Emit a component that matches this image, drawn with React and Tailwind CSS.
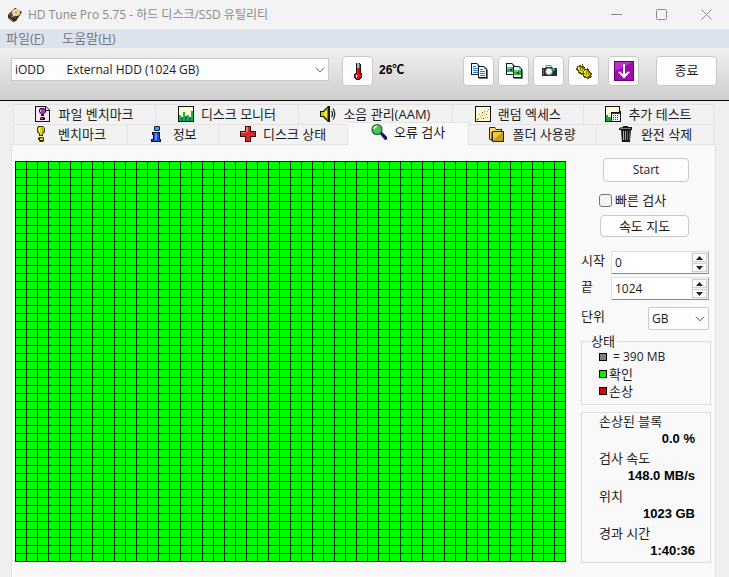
import { useState } from "react";
import { clsx } from "clsx";

const COLS = 50;
const ROWS = 50;
const CELL_W = 11;
const CELL_H = 8;

function Svg({ size = 16, children, className }) {
  return (
    <svg
      width={size}
      height={size}
      viewBox={`0 0 ${size} ${size}`}
      className={clsx("shrink-0", className)}
      aria-hidden="true"
    >
      {children}
    </svg>
  );
}

function DiskIcon() {
  return (
    <Svg>
      <path d="M1 8 L8 1 L15 5 L9 14 L6 15 L1 11z" fill="#2b2623" />
      <path d="M1 8 L8 1 L14 5 L8 12z" fill="#57483c" />
      <ellipse cx="9" cy="5.5" rx="4" ry="3.6" fill="#efd6a0" />
      <ellipse cx="9" cy="5.5" rx="1.2" ry="1" fill="#a98548" />
      <path d="M5 10 L8 7" stroke="#f4ead8" />
      <path d="M2 10 L6 14" stroke="#8b7d70" fill="none" />
    </Svg>
  );
}

function ThermometerIcon() {
  return (
    <Svg size={20}>
      <path d="M8 2h4v1h1v9h1v5h-1v1h-1v1H8v-1H7v-1H6v-4h1v-1h1z" fill="#3a0b0b" />
      <path d="M9 2h2v5H9z" fill="#5fd0d4" />
      <path d="M11 3h1v4h-1z" fill="#1f7f88" />
      <path d="M9 7h2v6h2v3h-1v1h-1v1H9v-1H8v-1H7v-3h2z" fill="#d3131b" />
      <path d="M11 7h1v6h-1z" fill="#8d0f14" />
      <path d="M8 14h2v1H9v2H8z" fill="#ffd9d9" />
    </Svg>
  );
}

function Page({ x, y, children }) {
  return (
    <g transform={`translate(${x} ${y})`}>
      <path d="M0 0h6l3 3v9H0z" fill="#0d1a24" />
      <path d="M1 1h5v2h2v8H1z" fill="#eef7ff" />
      <path d="M6 1l2 2H6z" fill="#7fa4bd" />
      {children}
    </g>
  );
}

function PageLines() {
  return <path d="M2 3h3v1H2zM2 5h5v1H2zM2 7h5v1H2zM2 9h5v1H2z" fill="#2f7fd0" />;
}

function PageImage() {
  return (
    <>
      <path d="M1 4h7v5H1z" fill="#3fae2f" />
      <path d="M1 4h4v2H1z" fill="#6fb8dd" />
      <path d="M4 6h2v2H4z" fill="#14540f" />
    </>
  );
}

function CopyTextIcon() {
  return (
    <Svg size={18}>
      <Page x={1} y={1}>
        <PageLines />
      </Page>
      <path d="M9 5h6l3 3v9H9z" fill="#6b767e" />
      <Page x={8} y={4}>
        <PageLines />
      </Page>
    </Svg>
  );
}

function CopyImageIcon() {
  return (
    <Svg size={18}>
      <Page x={1} y={1}>
        <PageImage />
      </Page>
      <path d="M9 5h6l3 3v9H9z" fill="#6b767e" />
      <Page x={8} y={4}>
        <PageImage />
      </Page>
    </Svg>
  );
}

function CameraIcon() {
  return (
    <Svg size={18}>
      <path d="M6 5.5V3.500h5v2" stroke="#7d8480" fill="none" />
      <path d="M2 6h3l1-1h6l1 1h4v8H2z" fill="#2b2f2d" />
      <path d="M3 7h1v6H3z" fill="#6a6a6a" />
      <circle cx="9" cy="9.500" r="3.800" fill="#7f8683" />
      <circle cx="9" cy="9.500" r="2.800" fill="#f7f7f7" />
      <path d="M12 6h3v3h-3z" fill="#1c8d4c" />
      <path d="M13 7h1v1h-1z" fill="#49f08e" />
    </Svg>
  );
}

function OptionsIcon() {
  return (
    <Svg size={18}>
      <path
        d="M1 6h1V4h2V3h2v1h1V2h1v2h1v1h1v2h2V6h1v1h1v2h1v1h1v1h1v2h-1v1h1v1h-1v1h-2v1h-2v-1H9v-1H8v-2H6v-1H4v-1H3V9H2V8H1z"
        fill="#5a5600"
      />
      <path
        d="M3 5h3v1h2v1h1v2H8v2H6v-1H4V8H3zM9 9h1V8h2v1h1v1h1v1h1v2h-1v1h-1v1h-2v-1H9v-2h1z"
        fill="#ddd41b"
      />
      <path d="M5 5h1v4H5zM7 5h1v4H7zM11 9h1v4h-1zM13 10h1v3h-1z" fill="#8f8800" />
      <path d="M3 5h1v2H3zM9 9h1v2H9z" fill="#fbf7a0" />
    </Svg>
  );
}

function DownIcon() {
  return (
    <Svg size={20}>
      <path d="M0 0h20v20H0z" fill="#650070" />
      <path d="M1 1h18v18H1z" fill="#a00bb0" />
      <path d="M1 1h18L1 10z" fill="#c84fd4" opacity=".6" />
      <path d="M10 3v12" stroke="#fff" strokeWidth="2" />
      <path d="M4 11l2-.5 4 3.500 4-3.500 2 .5-6 6.500z" fill="#fff" />
    </Svg>
  );
}

function FileBenchIcon() {
  return (
    <Svg>
      <path d="M0 0h11l4 4v12H0z" fill="#111" />
      <path d="M1 1h9v4h4v10H1z" fill="#f3eaf5" />
      <path d="M11 1l3 3h-3z" fill="#fff" />
      <path d="M5 2h4l2 2v2l-2 2v2H6V8L4 6V4z" fill="#3b0040" />
      <path d="M5 3h4l1 1v2L8 8H7L5 6z" fill="#b92bc9" />
      <path d="M5 4h1v2H5z" fill="#f0b4f5" />
      <path d="M6 11h3l1 1v2H5v-2z" fill="#3b0040" />
      <path d="M6 12h2v1H6z" fill="#c94fd6" />
    </Svg>
  );
}

function MonitorIcon() {
  return (
    <Svg>
      <path d="M0 0h16v16H0z" fill="#111" />
      <path d="M1 1h14v14H1z" fill="#fdfbd6" />
      <path d="M1 9h2v6H1zM5 6h2v9H5zM9 9h2v6H9zM13 5h2v10h-2z" fill="#19b92e" />
      <path d="M3 11h2v4H3zM7 10h2v5H7zM11 11h2v4h-2z" fill="#0d6f78" />
    </Svg>
  );
}

function SpeakerIcon() {
  return (
    <Svg>
      <path d="M0 5h3l5-5h2v16H8l-5-5H0z" fill="#191900" />
      <path d="M1 6h3v4H1z" fill="#c9c510" />
      <path d="M4 6l4-4v12l-4-4z" fill="#f3ee25" />
      <path d="M7 3h1v10H7z" fill="#8c8a00" />
      <path d="M11.500 5q2 3 0 6M13 2.500q3.500 5.500 0 11" stroke="#222" strokeWidth="1.300" fill="none" />
    </Svg>
  );
}

function RandomIcon() {
  return (
    <Svg>
      <path d="M0 0h16v16H0z" fill="#111" />
      <path d="M1 1h14v14H1z" fill="#fdf9d8" />
      <path
        d="M3 12h1v1H3zM5 10h1v1H5zM4 8h1v1H4zM7 9h1v1H7zM6 12h1v1H6zM9 7h1v1H9zM11 8h1v1h-1zM10 11h1v1h-1zM12 5h1v1h-1zM9 5h1v1H9zM12 11h1v1h-1zM13 3h1v1h-1z"
        fill="#d08a12"
      />
      <path d="M2 13h1v1H2zM8 12h1v1H8zM7 6h1v1H7z" fill="#8b3c00" />
    </Svg>
  );
}

function ExtraIcon() {
  return (
    <Svg>
      <path d="M0 0h15v5h1v11H0z" fill="#111" />
      <path d="M1 1h13v5H6v9H1z" fill="#fdfbd6" />
      <path d="M1 9h2v6H1zM3 11h3v4H3z" fill="#19a83c" />
      <path d="M7 7h8v8H7z" fill="#f4f4fa" />
      <path d="M7 7h8v1H7z" fill="#2a3a9c" />
      <path
        d="M8 9h1v1H8zM10 9h1v1h-1zM12 9h1v1h-1zM8 11h1v1H8zM10 11h1v1h-1zM12 11h1v1h-1zM8 13h1v1H8zM10 13h1v1h-1zM12 13h1v1h-1z"
        fill="#b01050"
      />
    </Svg>
  );
}

function BenchIcon() {
  return (
    <Svg>
      <path d="M3 0h5l2 2v4L8 8v2H4V8L2 6V2z" fill="#3b3900" />
      <path d="M4 1h4l1 1v3L7 8v1H5V8L3 5V2z" fill="#e0d81a" />
      <path d="M4 2h1v4H4z" fill="#fffbb0" />
      <path d="M7 2h1v4H7z" fill="#a59e0a" />
      <path d="M4 11h4l1 1v3l-1 1H5l-1-1v-1H3v-2z" fill="#3b3900" />
      <path d="M5 12h3v2H5z" fill="#d6cd10" />
    </Svg>
  );
}

function InfoIcon() {
  return (
    <Svg>
      <path d="M5 0h4l1 1v3L9 5H5L4 4V1z" fill="#06123a" />
      <path d="M5 1h4v3H5z" fill="#3aa6ea" />
      <path d="M2 6h8v7h1v3H1v-3h2V9H2z" fill="#06123a" />
      <path d="M3 7h6v7h1v1H2v-1h2V8H3z" fill="#1f4fd0" />
      <path d="M5 7h2v7H5z" fill="#4c90f2" />
    </Svg>
  );
}

function CrossIcon() {
  return (
    <Svg>
      <path d="M5 0h6v5h5v6h-5v5H5v-5H0V5h5z" fill="#400508" />
      <path d="M6 1h4v5h5v4h-5v5H6v-5H1V6h5z" fill="#d42a2c" />
      <path d="M6 1h2v5H6zM1 6h5v1H1z" fill="#f07a74" />
    </Svg>
  );
}

function MagnifierIcon() {
  return (
    <Svg>
      <path d="M8 9l2-2 6 6v2l-1 1h-1z" fill="#060c6e" />
      <path d="M10 10l4 4" stroke="#1c2aa8" />
      <circle cx="6" cy="5.500" r="5.500" fill="#15451d" />
      <circle cx="6" cy="5.500" r="4.500" fill="#45c957" />
      <path d="M3 5q0-2 3-3" stroke="#d9ffe0" strokeWidth="1.500" fill="none" />
    </Svg>
  );
}

function FolderIcon() {
  return (
    <Svg>
      <path d="M0 2l1-1h5l1 2h6v2h2v11H4l-4-3z" fill="#2e2300" />
      <path d="M1 2h5l1 2h5v1H4L2 7v6H1z" fill="#f5dc6c" />
      <path d="M4 6h10v9H4z" fill="#c99a1f" />
      <path d="M4 6h10L4 14z" fill="#ecc850" />
      <path d="M2 7l1-1v8l-1-1z" fill="#a87d12" />
    </Svg>
  );
}

function TrashIcon() {
  return (
    <Svg>
      <path d="M5 0h5v1h4v3h-1l-1 12H4L3 4H1V2l4-1z" fill="#161616" />
      <path d="M2 2h11v1H2z" fill="#777" />
      <path d="M5 5h1v9H5zM7 5h1v9H7z" fill="#a6a6a6" />
      <path d="M9 5h1v9H9zM11 5h1v9h-1z" fill="#5d5d5d" />
    </Svg>
  );
}

function Chevron({ className }) {
  return (
    <svg
      width="10"
      height="6"
      viewBox="0 0 10 6"
      className={clsx("pointer-events-none absolute", className)}
      aria-hidden="true"
    >
      <path d="M1 .8l4 4 4-4" stroke="#555" fill="none" />
    </svg>
  );
}

const backTabs = [
  { label: "파일 벤치마크", icon: FileBenchIcon, width: "grow-142" },
  { label: "디스크 모니터", icon: MonitorIcon, width: "grow-143" },
  { label: "소음 관리(AAM)", icon: SpeakerIcon, width: "grow-154" },
  { label: "랜덤 엑세스", icon: RandomIcon, width: "grow-131" },
  { label: "추가 테스트", icon: ExtraIcon, width: "grow-130" },
];

const frontTabs = [
  { label: "벤치마크", icon: BenchIcon, width: "grow-114" },
  { label: "정보", icon: InfoIcon, width: "grow-91" },
  { label: "디스크 상태", icon: CrossIcon, width: "grow-129" },
  { label: "오류 검사", icon: MagnifierIcon, width: "grow-121" },
  { label: "폴더 사용량", icon: FolderIcon, width: "grow-128" },
  { label: "완전 삭제", icon: TrashIcon, width: "grow-117" },
];

const tools = [
  { label: "텍스트 복사", icon: CopyTextIcon },
  { label: "이미지 복사", icon: CopyImageIcon },
  { label: "스크린샷 저장", icon: CameraIcon },
  { label: "옵션", icon: OptionsIcon },
];

function TabRow({ tabs, active, onSelect }) {
  return (
    <div className="flex h-5 border-l border-[#e3e3e3]">
      {tabs.map(({ label, icon: Icon, width }) => {
        const selected = label === active;
        return (
          <button
            key={label}
            type="button"
            role="tab"
            aria-selected={selected}
            onClick={() => onSelect(label)}
            className={clsx(
              "flex basis-0 items-center justify-center gap-[7px] border-t border-r border-[#e3e3e3] text-[13px] leading-4 whitespace-nowrap",
              width,
              selected ? "z-10 -mt-0.5 -mb-px bg-[#f9f9f9] pb-1" : "bg-[#f2f2f2] pb-0.5",
            )}
          >
            <Icon />
            {label}
          </button>
        );
      })}
    </div>
  );
}

function ToolButton({ label, className, children }) {
  return (
    <button
      type="button"
      aria-label={label}
      className={clsx(
        "flex h-[30px] items-center justify-center rounded border border-[#c9c9c9] bg-[#fdfdfd]",
        className,
      )}
    >
      {children}
    </button>
  );
}

function BlockMap() {
  const width = COLS * CELL_W + 1;
  const height = ROWS * CELL_H + 1;
  const columns = Array.from({ length: COLS + 1 }, (_, i) => i * CELL_W);
  const rows = Array.from({ length: ROWS + 1 }, (_, i) => i * CELL_H);

  return (
    <svg
      viewBox={`0 0 ${width} ${height}`}
      className="h-auto w-full"
      shapeRendering="crispEdges"
      role="img"
      aria-label="오류 검사"
    >
      <rect width={width} height={height} fill="#00ff00" />
      {columns.map((x) => (
        <rect key={x} x={x} width="1" height={height} fill="#042c04" />
      ))}
      {rows.map((y) => (
        <rect key={y} y={y} width={width} height="1" fill="#032203" />
      ))}
    </svg>
  );
}

function NumberField({ id, label, value, onChange }) {
  return (
    <div className="flex h-[23px] justify-between">
      <label htmlFor={id} className="text-[13px] leading-[18px]">
        {label}
      </label>
      <div className="flex w-[98px] border border-[#e2e2e2] border-r-[#a5a5a5] border-b-[#8a8a8a] bg-white">
        <input
          id={id}
          type="text"
          value={value}
          onChange={(e) => onChange(Number(e.target.value) || 0)}
          className="w-0 grow pl-[3px] text-xs outline-none"
        />
        <div className="flex w-[17px] flex-col gap-px bg-[#f0f0f0] p-px">
          <button
            type="button"
            aria-label={`${label} +`}
            onClick={() => onChange(value + 1)}
            className="flex grow items-center justify-center border border-[#cfcfcf] bg-[#fbfbfb]"
          >
            <svg width="7" height="4" viewBox="0 0 7 4" aria-hidden="true">
              <path d="M0 4L3.500 0 7 4z" fill="#222" />
            </svg>
          </button>
          <button
            type="button"
            aria-label={`${label} -`}
            onClick={() => onChange(Math.max(0, value - 1))}
            className="flex grow items-center justify-center border border-[#cfcfcf] bg-[#fbfbfb]"
          >
            <svg width="7" height="4" viewBox="0 0 7 4" aria-hidden="true">
              <path d="M0 0h7L3.500 4z" fill="#222" />
            </svg>
          </button>
        </div>
      </div>
    </div>
  );
}

function Stat({ label, value }) {
  return (
    <div>
      <dt className="text-[13px] leading-[17px]">{label}</dt>
      <dd className="text-right font-['Liberation_Sans',sans-serif] text-[13px] leading-[18px] font-bold text-black">
        {value}
      </dd>
    </div>
  );
}

function Sidebar() {
  const [start, setStart] = useState(0);
  const [end, setEnd] = useState(1024);

  return (
    <aside className="flex w-[130px] shrink-0 flex-col">
      <div className="flex flex-col items-end pr-[22px]">
        <button
          type="button"
          className="h-6 w-[86px] rounded border border-[#cbcbcb] bg-[#fdfdfd] text-xs"
        >
          Start
        </button>
        <label className="mt-2.5 flex w-[90px] items-center gap-[3px] text-[13px] leading-4 whitespace-nowrap">
          <input
            type="checkbox"
            className="size-[13px] shrink-0 appearance-none rounded-[3px] border border-[#767676] bg-[#f5f5f5] checked:bg-[#0067c0]"
          />
          빠른 검사
        </label>
        <button
          type="button"
          className="mt-[7px] h-[22px] w-[89px] rounded border border-[#cbcbcb] bg-[#fdfdfd] text-[13px] leading-4"
        >
          속도 지도
        </button>
      </div>

      <div className="mt-3.5 flex flex-col gap-[3px] pr-0.5">
        <NumberField id="start" label="시작" value={start} onChange={setStart} />
        <NumberField id="end" label="끝" value={end} onChange={setEnd} />
      </div>

      <div className="mt-[7px] flex justify-between pr-0.5">
        <label htmlFor="unit" className="text-[13px] leading-[18px]">
          단위
        </label>
        <div className="relative w-[61px]">
          <select
            id="unit"
            defaultValue="GB"
            className="block h-[23px] w-full appearance-none rounded-xs border border-[#cbcbcb] bg-[#fdfdfd] pl-[3px] text-xs"
          >
            <option>MB</option>
            <option>GB</option>
          </select>
          <Chevron className="top-[9px] right-1" />
        </div>
      </div>

      <fieldset className="mt-[3px] h-[72px] border border-[#dcdcdc] pl-[17px] text-[13px] leading-4">
        <legend className="-ml-2.5 px-0.5">상태</legend>
        <ul className="flex flex-col gap-px">
          <li className="flex items-center gap-1.5 text-xs leading-4">
            <span className="size-2 border border-black bg-[#808080]" />= 390 MB
          </li>
          <li className="flex items-center gap-0.5">
            <span className="size-2 border border-black bg-[#00f000]" />
            확인
          </li>
          <li className="flex items-center gap-0.5">
            <span className="size-2 border border-black bg-[#e00000]" />
            손상
          </li>
        </ul>
      </fieldset>

      <dl className="mt-[7px] flex h-[151px] flex-col justify-between border border-[#dcdcdc] pr-[15px] pb-0.5 pl-[17px]">
        <Stat label="손상된 블록" value="0.0 %" />
        <Stat label="검사 속도" value="148.0 MB/s" />
        <Stat label="위치" value="1023 GB" />
        <Stat label="경과 시간" value="1:40:36" />
      </dl>
    </aside>
  );
}

export default function App() {
  const [tab, setTab] = useState("오류 검사");

  return (
    <div className="flex min-h-screen flex-col bg-[#efefef] font-['Open_Sans','Noto_Sans_CJK_KR',sans-serif] text-[#1c1c1c]">
      <header className="flex h-[29px] items-center bg-[#f3f3f3] pl-[7px] text-[#8b8b8b]">
        <DiskIcon />
        <h1 className="ml-[5px] grow text-xs leading-4">HD Tune Pro 5.75 - 하드 디스크/SSD 유틸리티</h1>
        <div className="flex">
          <button type="button" aria-label="최소화" className="flex w-[46px] justify-center">
            <Svg size={11}>
              <path d="M0 5.500h11" stroke="#8b8b8b" />
            </Svg>
          </button>
          <button type="button" aria-label="최대화" className="flex w-[45px] justify-center">
            <Svg size={11}>
              <rect x=".5" y=".5" width="10" height="10" rx="1" stroke="#8b8b8b" fill="none" />
            </Svg>
          </button>
          <button type="button" aria-label="닫기" className="flex w-[45px] justify-center">
            <Svg size={11}>
              <path d="M.5 .5l10 10M10.500 .5l-10 10" stroke="#8b8b8b" />
            </Svg>
          </button>
        </div>
      </header>

      <nav className="flex h-[19px] items-center gap-[18px] bg-[#dce3ec] pb-0.5 pl-1.5 text-[13px] leading-4 text-[#737982]">
        <button type="button">
          파일(<u>F</u>)
        </button>
        <button type="button">
          도움말(<u>H</u>)
        </button>
      </nav>

      <div className="flex h-[53px] items-start border-b border-black bg-linear-to-b from-[#f0f0f0] to-[#cecece] pt-2 pr-3 pl-[11px]">
        <div className="relative mt-0.5 w-[318px]">
          <select
            aria-label="드라이브"
            className="block h-[23px] w-full appearance-none border border-[#cbcbcb] bg-[#fdfdfd] pl-[3px] text-xs"
          >
            <option>{"iODD\u00a0\u00a0\u00a0\u00a0\u00a0\u00a0\u00a0External HDD (1024 GB)"}</option>
          </select>
          <Chevron className="top-[9px] right-1" />
        </div>
        <ToolButton label="온도" className="ml-[13px] w-[31px]">
          <ThermometerIcon />
        </ToolButton>
        <span className="ml-1.5 grow font-['Liberation_Sans','Noto_Sans_CJK_KR',sans-serif] text-xs leading-[28px] font-bold text-black">
          26℃
        </span>
        <div className="flex gap-1">
          {tools.map(({ label, icon: Icon }) => (
            <ToolButton key={label} label={label} className="w-[31px]">
              <Icon />
            </ToolButton>
          ))}
        </div>
        <ToolButton label="최소화" className="ml-[9px] w-[31px]">
          <DownIcon />
        </ToolButton>
        <ToolButton className="ml-[17px] w-[61px] text-[13px]">종료</ToolButton>
      </div>

      <main className="flex grow flex-col pt-[3px] pr-[13px] pl-[11px]">
        <div role="tablist" className="px-0.5">
          <TabRow tabs={backTabs} active={tab} onSelect={setTab} />
          <TabRow tabs={frontTabs} active={tab} onSelect={setTab} />
        </div>
        <section className="flex grow items-start gap-[15px] border-x border-t border-[#e3e3e3] bg-[#f9f9f9] pr-1 pl-[3px]">
          <div className="grow pt-4">
            <BlockMap />
          </div>
          <div className="pt-[13px]">
            <Sidebar />
          </div>
        </section>
      </main>
    </div>
  );
}
